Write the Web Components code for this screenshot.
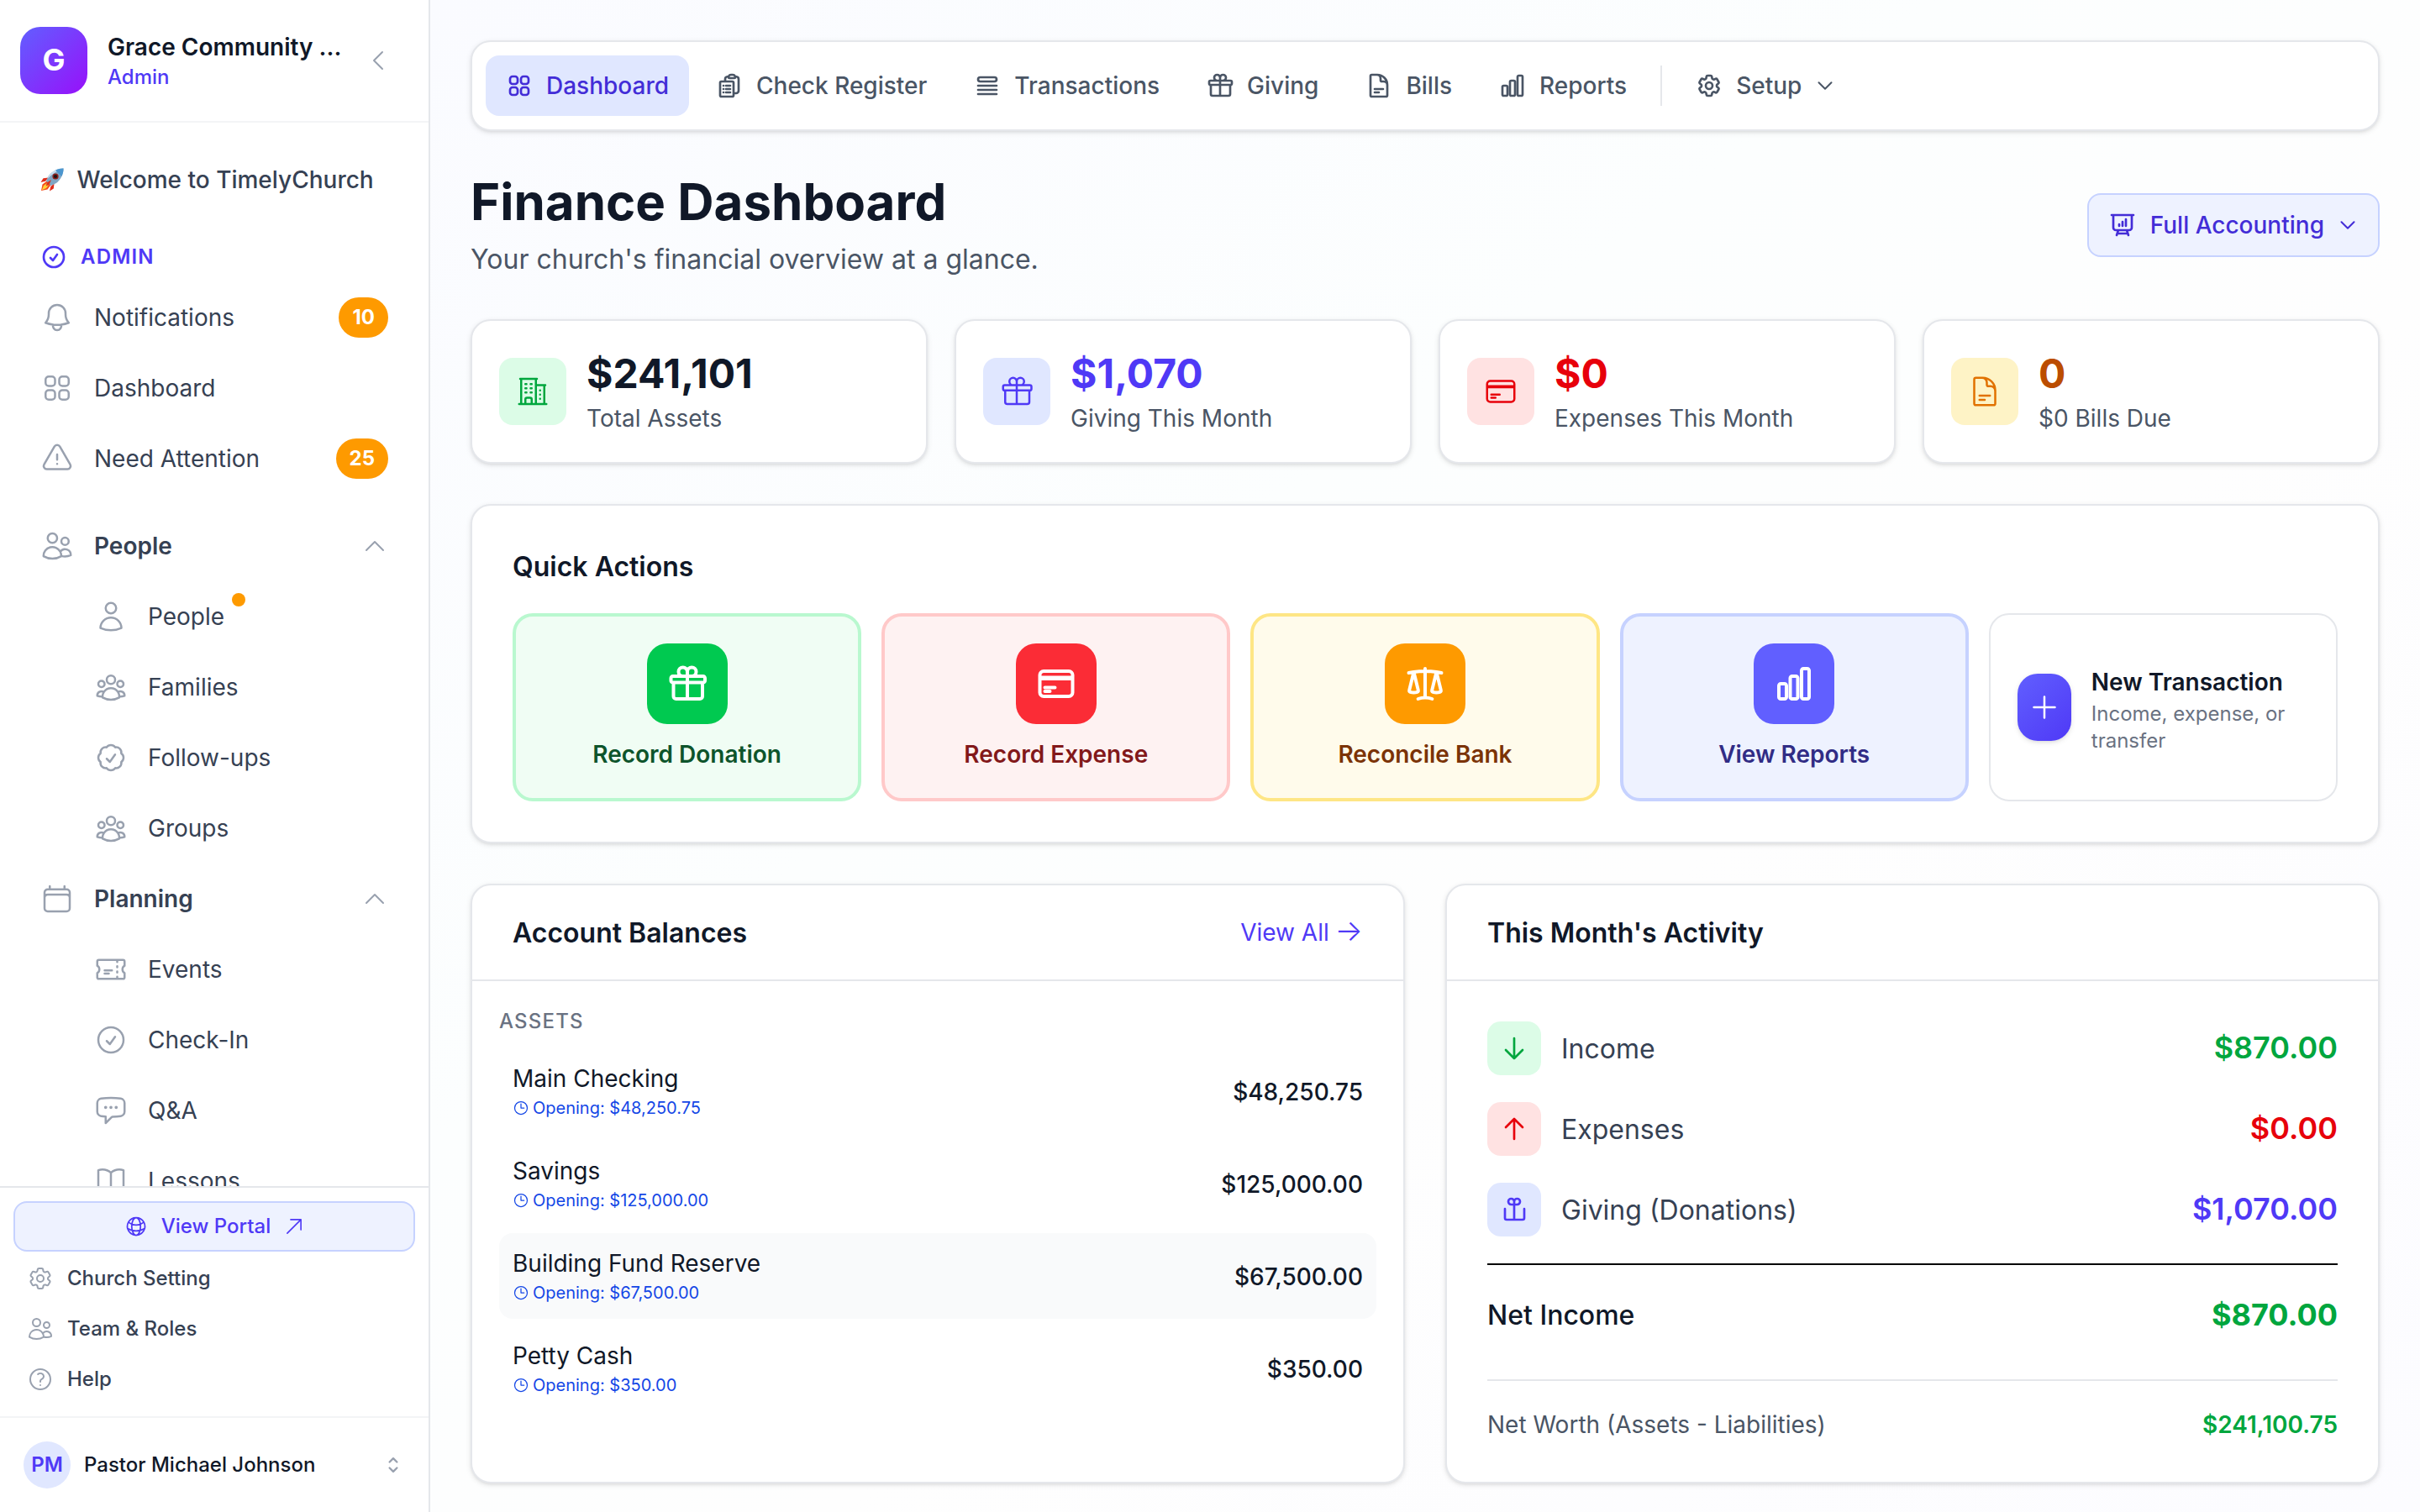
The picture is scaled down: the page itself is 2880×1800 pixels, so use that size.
<!DOCTYPE html>
<html lang="en">
<head>
<meta charset="utf-8">
<title>Finance Dashboard</title>
<style>
  html, body {
    margin: 0;
    height: 100%;
  }

  body {
    font-family: Inter, "Liberation Sans", sans-serif;
    font-size: 28px;
    line-height: 40px;
    color: #101828;
    overflow: hidden;
  }
</style>
</head>
<body>
<finance-app></finance-app>

<script>
const ICONS = {
  grid: 'M3.75 6A2.25 2.25 0 0 1 6 3.75h2.25A2.25 2.25 0 0 1 10.5 6v2.25a2.25 2.25 0 0 1-2.25 2.25H6a2.25 2.25 0 0 1-2.25-2.25V6ZM3.75 15.75A2.25 2.25 0 0 1 6 13.5h2.25a2.25 2.25 0 0 1 2.25 2.25V18a2.25 2.25 0 0 1-2.25 2.25H6A2.25 2.25 0 0 1 3.75 18v-2.25ZM13.5 6a2.25 2.25 0 0 1 2.25-2.25H18A2.25 2.25 0 0 1 20.25 6v2.25A2.25 2.25 0 0 1 18 10.5h-2.25a2.25 2.25 0 0 1-2.25-2.25V6ZM13.5 15.75a2.25 2.25 0 0 1 2.25-2.25H18a2.25 2.25 0 0 1 2.25 2.25V18A2.25 2.25 0 0 1 18 20.25h-2.25A2.25 2.25 0 0 1 13.5 18v-2.25Z',
  clipboard: 'M9 12h3.75M9 15h3.75M9 18h3.75m3 .75H18a2.25 2.25 0 0 0 2.25-2.25V6.108c0-1.135-.845-2.098-1.976-2.192a48.424 48.424 0 0 0-1.123-.08m-5.801 0c-.065.21-.1.433-.1.664 0 .414.336.75.75.75h4.5a.75.75 0 0 0 .75-.75 2.25 2.25 0 0 0-.1-.664m-5.8 0A2.251 2.251 0 0 1 13.5 2.25H15c1.012 0 1.867.668 2.15 1.586m-5.8 0c-.376.023-.75.05-1.124.08C9.095 4.01 8.25 4.973 8.25 6.108V8.25m0 0H4.875c-.621 0-1.125.504-1.125 1.125v11.25c0 .621.504 1.125 1.125 1.125h9.75c.621 0 1.125-.504 1.125-1.125V9.375c0-.621-.504-1.125-1.125-1.125H8.25ZM6.75 12h.008v.008H6.75V12Zm0 3h.008v.008H6.75V15Zm0 3h.008v.008H6.75V18Z',
  queue: 'M3.75 12h16.5m-16.5 3.75h16.5M3.75 19.5h16.5M5.625 4.5h12.75a1.875 1.875 0 0 1 0 3.75H5.625a1.875 1.875 0 0 1 0-3.75Z',
  gift: 'M21 11.25v8.25a1.5 1.5 0 0 1-1.5 1.5H5.25a1.5 1.5 0 0 1-1.5-1.5v-8.25M12 4.875A2.625 2.625 0 1 0 9.375 7.5H12m0-2.625V7.5m0-2.625A2.625 2.625 0 1 1 14.625 7.5H12m0 0V21m-8.625-9.75h18c.621 0 1.125-.504 1.125-1.125v-1.5c0-.621-.504-1.125-1.125-1.125h-18c-.621 0-1.125.504-1.125 1.125v1.5c0 .621.504 1.125 1.125 1.125Z',
  giftOpen: 'M21 11.25v8.25a1.5 1.5 0 0 1-1.5 1.5H5.25a1.5 1.5 0 0 1-1.5-1.5v-8.25M12 4.875A2.625 2.625 0 1 0 9.375 7.5H12m0-2.625V7.5m0-2.625A2.625 2.625 0 1 1 14.625 7.5H12m0 0V21',
  document: 'M19.5 14.25v-2.625a3.375 3.375 0 0 0-3.375-3.375h-1.5A1.125 1.125 0 0 1 13.5 7.125v-1.5a3.375 3.375 0 0 0-3.375-3.375H8.25m0 12.75h7.5m-7.5 3H12M10.5 2.25H5.625c-.621 0-1.125.504-1.125 1.125v17.25c0 .621.504 1.125 1.125 1.125h12.75c.621 0 1.125-.504 1.125-1.125V11.25a9 9 0 0 0-9-9Z',
  chart: 'M3 13.125C3 12.504 3.504 12 4.125 12h2.25c.621 0 1.125.504 1.125 1.125v6.75C7.5 20.496 6.996 21 6.375 21h-2.25A1.125 1.125 0 0 1 3 19.875v-6.75ZM9.75 8.625c0-.621.504-1.125 1.125-1.125h2.25c.621 0 1.125.504 1.125 1.125v11.25c0 .621-.504 1.125-1.125 1.125h-2.25a1.125 1.125 0 0 1-1.125-1.125V8.625ZM16.5 4.125c0-.621.504-1.125 1.125-1.125h2.25C20.496 3 21 3.504 21 4.125v15.75c0 .621-.504 1.125-1.125 1.125h-2.25a1.125 1.125 0 0 1-1.125-1.125V4.125Z',
  cog: 'M9.594 3.94c.09-.542.56-.94 1.11-.94h2.593c.55 0 1.02.398 1.11.94l.213 1.281c.063.374.313.686.645.87.074.04.147.083.22.127.325.196.72.257 1.075.124l1.217-.456a1.125 1.125 0 0 1 1.37.49l1.296 2.247a1.125 1.125 0 0 1-.26 1.431l-1.003.827c-.293.241-.438.613-.43.992a7.723 7.723 0 0 1 0 .255c-.008.378.137.75.43.991l1.004.827c.424.35.534.955.26 1.43l-1.298 2.247a1.125 1.125 0 0 1-1.369.491l-1.217-.456c-.355-.133-.75-.072-1.076.124a6.47 6.47 0 0 1-.22.128c-.331.183-.581.495-.644.869l-.213 1.281c-.09.543-.56.94-1.11.94h-2.594c-.55 0-1.019-.398-1.11-.94l-.213-1.281c-.062-.374-.312-.686-.644-.87a6.52 6.52 0 0 1-.22-.127c-.325-.196-.72-.257-1.076-.124l-1.217.456a1.125 1.125 0 0 1-1.369-.49l-1.297-2.247a1.125 1.125 0 0 1 .26-1.431l1.004-.827c.292-.24.437-.613.43-.991a6.932 6.932 0 0 1 0-.255c.007-.38-.138-.751-.43-.992l-1.004-.827a1.125 1.125 0 0 1-.26-1.43l1.297-2.247a1.125 1.125 0 0 1 1.37-.491l1.216.456c.356.133.751.072 1.076-.124.072-.044.146-.086.22-.128.332-.183.582-.495.644-.869l.214-1.28ZM15 12a3 3 0 1 1-6 0 3 3 0 0 1 6 0Z',
  building: 'M2.25 21h19.5m-18-18v18m10.5-18v18m6-13.5V21M6.75 6.75h.75m-.75 3h.75m-.75 3h.75m3-6h.75m-.75 3h.75m-.75 3h.75M6.75 21v-3.375c0-.621.504-1.125 1.125-1.125h2.25c.621 0 1.125.504 1.125 1.125V21M3 3h12m-.75 4.5H21m-3.75 3.75h.008v.008h-.008v-.008Zm0 3h.008v.008h-.008v-.008Zm0 3h.008v.008h-.008v-.008Z',
  card: 'M2.25 8.25h19.5M2.25 9h19.5m-16.5 5.25h6m-6 2.25h3m-3.75 3h15a2.25 2.25 0 0 0 2.25-2.25V6.75A2.25 2.25 0 0 0 19.5 4.5h-15a2.25 2.25 0 0 0-2.25 2.25v10.5A2.25 2.25 0 0 0 4.5 19.5Z',
  scale: 'M12 3v17.25m0 0c-1.472 0-2.882.265-4.185.75M12 20.25c1.472 0 2.882.265 4.185.75M18.75 4.97A48.416 48.416 0 0 0 12 4.5c-2.291 0-4.545.16-6.75.47m13.5 0c1.01.143 2.01.317 3 .52m-3-.52 2.62 10.726c.122.499-.106 1.028-.589 1.202a5.988 5.988 0 0 1-2.031.352 5.988 5.988 0 0 1-2.031-.352c-.483-.174-.711-.703-.59-1.202L18.75 4.971Zm-16.5.52c.99-.203 1.99-.377 3-.52m0 0 2.62 10.726c.122.499-.106 1.028-.589 1.202a5.989 5.989 0 0 1-2.031.352 5.989 5.989 0 0 1-2.031-.352c-.483-.174-.711-.703-.59-1.202L5.25 4.971Z',
  presentation: 'M3.75 3v11.25A2.25 2.25 0 0 0 6 16.5h2.25M3.75 3h-1.5m1.5 0h16.5m0 0h1.5m-1.5 0v11.25A2.25 2.25 0 0 1 18 16.5h-2.25m-7.5 0h7.5m-7.5 0-1 3m8.5-3 1 3m0 0 .5 1.5m-.5-1.5h-9.5m0 0-.5 1.5M9 11.25v1.5M12 9v3.75m3-6v6',
  bell: 'M14.857 17.082a23.848 23.848 0 0 0 5.454-1.31A8.967 8.967 0 0 1 18 9.75V9A6 6 0 0 0 6 9v.75a8.967 8.967 0 0 1-2.312 6.022c1.733.64 3.56 1.085 5.455 1.31m5.714 0a24.255 24.255 0 0 1-5.714 0m5.714 0a3 3 0 1 1-5.714 0',
  warning: 'M12 9v3.75m-9.303 3.376c-.866 1.5.217 3.374 1.948 3.374h14.71c1.73 0 2.813-1.874 1.948-3.374L13.949 3.378c-.866-1.5-3.032-1.5-3.898 0L2.697 16.126ZM12 15.75h.007v.008H12v-.008Z',
  users: 'M15 19.128a9.38 9.38 0 0 0 2.625.372 9.337 9.337 0 0 0 4.121-.952 4.125 4.125 0 0 0-7.533-2.493M15 19.128v-.003c0-1.113-.285-2.16-.786-3.07M15 19.128v.106A12.318 12.318 0 0 1 8.624 21c-2.331 0-4.512-.645-6.374-1.766l-.001-.109a6.375 6.375 0 0 1 11.964-3.07M12 6.375a3.375 3.375 0 1 1-6.75 0 3.375 3.375 0 0 1 6.75 0Zm8.25 2.25a2.625 2.625 0 1 1-5.25 0 2.625 2.625 0 0 1 5.25 0Z',
  user: 'M15.75 6a3.75 3.75 0 1 1-7.5 0 3.75 3.75 0 0 1 7.5 0ZM4.501 20.118a7.5 7.5 0 0 1 14.998 0A17.933 17.933 0 0 1 12 21.75c-2.676 0-5.216-.584-7.499-1.632Z',
  group: 'M18 18.72a9.094 9.094 0 0 0 3.741-.479 3 3 0 0 0-4.682-2.72m.94 3.198.001.031c0 .225-.012.447-.037.666A11.944 11.944 0 0 1 12 21c-2.17 0-4.207-.576-5.963-1.584A6.062 6.062 0 0 1 6 18.719m12 0a5.971 5.971 0 0 0-.941-3.197m0 0A5.995 5.995 0 0 0 12 12.75a5.995 5.995 0 0 0-5.058 2.772m0 0a3 3 0 0 0-4.681 2.72 8.986 8.986 0 0 0 3.74.477m.94-3.197a5.971 5.971 0 0 0-.94 3.197M15 6.75a3 3 0 1 1-6 0 3 3 0 0 1 6 0Zm6 3a2.25 2.25 0 1 1-4.5 0 2.25 2.25 0 0 1 4.5 0Zm-13.5 0a2.25 2.25 0 1 1-4.5 0 2.25 2.25 0 0 1 4.5 0Z',
  badge: 'M9 12.75 11.25 15 15 9.75M21 12c0 1.268-.63 2.39-1.593 3.068a3.745 3.745 0 0 1-1.043 3.296 3.745 3.745 0 0 1-3.296 1.043A3.745 3.745 0 0 1 12 21c-1.268 0-2.39-.63-3.068-1.593a3.746 3.746 0 0 1-3.296-1.043 3.745 3.745 0 0 1-1.043-3.296A3.745 3.745 0 0 1 3 12c0-1.268.63-2.39 1.593-3.068a3.745 3.745 0 0 1 1.043-3.296 3.746 3.746 0 0 1 3.296-1.043A3.746 3.746 0 0 1 12 3c1.268 0 2.39.63 3.068 1.593a3.746 3.746 0 0 1 3.296 1.043 3.746 3.746 0 0 1 1.043 3.296A3.745 3.745 0 0 1 21 12Z',
  check: 'M9 12.75 11.25 15 15 9.75M21 12a9 9 0 1 1-18 0 9 9 0 0 1 18 0Z',
  calendar: 'M6.75 3v2.25M17.25 3v2.25M3 18.75V7.5a2.25 2.25 0 0 1 2.25-2.25h13.5A2.25 2.25 0 0 1 21 7.5v11.25m-18 0A2.25 2.25 0 0 0 5.25 21h13.5A2.25 2.25 0 0 0 21 18.75m-18 0v-7.5A2.25 2.25 0 0 1 5.25 9h13.5A2.25 2.25 0 0 1 21 11.25v7.5',
  ticket: 'M16.5 6v.75m0 3v.75m0 3v.75m0 3V18m-9-5.25h5.25M7.5 15h3M3.375 5.25c-.621 0-1.125.504-1.125 1.125v3.026a2.999 2.999 0 0 1 0 5.198v3.026c0 .621.504 1.125 1.125 1.125h17.25c.621 0 1.125-.504 1.125-1.125v-3.026a2.999 2.999 0 0 1 0-5.198V6.375c0-.621-.504-1.125-1.125-1.125H3.375Z',
  chat: 'M8.625 9.75a.375.375 0 1 1-.75 0 .375.375 0 0 1 .75 0Zm0 0H8.25m4.125 0a.375.375 0 1 1-.75 0 .375.375 0 0 1 .75 0Zm0 0H12m4.125 0a.375.375 0 1 1-.75 0 .375.375 0 0 1 .75 0Zm0 0h-.375m-13.5 3.01c0 1.6 1.123 2.994 2.707 3.227 1.087.16 2.185.283 3.293.369V21l4.184-4.183a1.14 1.14 0 0 1 .778-.332 48.294 48.294 0 0 0 5.83-.498c1.585-.233 2.708-1.626 2.708-3.228V6.741c0-1.602-1.123-2.995-2.707-3.228A48.394 48.394 0 0 0 12 3c-2.392 0-4.744.175-7.043.513C3.373 3.746 2.25 5.14 2.25 6.741v6.018Z',
  book: 'M12 6.042A8.967 8.967 0 0 0 6 3.75c-1.052 0-2.062.18-3 .512v14.25A8.987 8.987 0 0 1 6 18c2.305 0 4.408.867 6 2.292m0-14.25a8.966 8.966 0 0 1 6-2.292c1.052 0 2.062.18 3 .512v14.25A8.987 8.987 0 0 0 18 18a8.967 8.967 0 0 0-6 2.292m0-14.25v14.25',
  globe: 'M12 21a9.004 9.004 0 0 0 8.716-6.747M12 21a9.004 9.004 0 0 1-8.716-6.747M12 21c2.485 0 4.5-4.03 4.5-9S14.485 3 12 3m0 18c-2.485 0-4.5-4.03-4.5-9S9.515 3 12 3m0 0a8.997 8.997 0 0 1 7.843 4.582M12 3a8.997 8.997 0 0 0-7.843 4.582m15.686 0A11.953 11.953 0 0 1 12 10.5c-2.998 0-5.74-1.1-7.843-2.918m15.686 0A8.959 8.959 0 0 1 21 12c0 .778-.099 1.533-.284 2.253m0 0A17.919 17.919 0 0 1 12 16.5c-3.162 0-6.133-.815-8.716-2.247m0 0A9.015 9.015 0 0 1 3 12c0-1.605.42-3.113 1.157-4.418',
  help: 'M9.879 7.519c1.171-1.025 3.071-1.025 4.242 0 1.172 1.025 1.172 2.687 0 3.712-.203.179-.43.326-.67.442-.745.361-1.45.999-1.45 1.827v.75M21 12a9 9 0 1 1-18 0 9 9 0 0 1 18 0Zm-9 5.25h.008v.008H12v-.008Z',
  clock: 'M12 6v6h4.5m4.5 0a9 9 0 1 1-18 0 9 9 0 0 1 18 0Z',
  external: 'm4.5 19.5 15-15m0 0H8.25m11.25 0v11.25',
  plus: 'M12 4.5v15m7.5-7.5h-15',
  down: 'm19.5 8.25-7.5 7.5-7.5-7.5',
  up: 'm4.5 15.75 7.5-7.5 7.5 7.5',
  left: 'M15.75 19.5 8.25 12l7.5-7.5',
  updown: 'M8.25 15 12 18.75 15.75 15m-7.5-6L12 5.25 15.75 9',
  arrowDown: 'M19.5 13.5 12 21m0 0-7.5-7.5M12 21V3',
  arrowUp: 'M4.5 10.5 12 3m0 0 7.5 7.5M12 3v18'
};

function define(name, render) {
  customElements.define(name, class extends HTMLElement {
    constructor() {
      super();
      this.attachShadow({ mode: 'open' });
    }

    connectedCallback() {
      this.shadowRoot.innerHTML = render(this);
    }
  });
}

const attr = (el, name, fallback = '') => el.getAttribute(name) ?? fallback;

define('ui-icon', (el) => `
  <style>
    :host {
      display: block;
      flex: none;
      width: ${attr(el, 'size', 32)}px;
      height: ${attr(el, 'size', 32)}px;
    }
    svg { display: block; width: 100%; height: 100%; }
  </style>
  <svg viewBox="0 0 24 24" fill="none" stroke="currentColor" stroke-width="${attr(el, 'stroke', 1.5)}"
    stroke-linecap="round" stroke-linejoin="round"><path d="${ICONS[attr(el, 'name')]}"/></svg>
`);

define('rocket-icon', () => `
  <style>
    :host { display: block; flex: none; width: 28px; height: 28px; }
    svg { display: block; }
  </style>
  <svg viewBox="0 0 28 28" width="28" height="28">
    <path d="M9.5 11.5 3.5 12.2 0.5 17l5.6-1.3ZM16.500 18.500 15.800 24.500 11 27.500l1.300-5.600Z" fill="#e02d1b"/>
    <path d="M8.500 15 2.500 19.500 1 27l7.500-1.500 4.500-6Z" fill="#f6501e"/>
    <path d="M8 18 4 21 1.800 26.200 7 24 10 20Z" fill="#ffd43a"/>
    <path d="M27.500.5C21 .3 14.500 3.500 10 9L7 15.500 12.500 21 19 18C24.500 13.500 27.700 7 27.500.5Z" fill="#7fa6c4"/>
    <path d="M27.500.5C21 .3 14.500 3.500 10 9L8.800 12.500C14 7 20 3 27.500.5Z" fill="#c9dfee"/>
    <path d="M27.500.5C24 .4 20.800 1.300 18 2.700L25.300 10C26.800 7.200 27.600 4 27.500.5Z" fill="#4b96cf"/>
    <circle cx="18" cy="10" r="3.600" fill="#8c1d18"/>
    <circle cx="18" cy="10" r="2.100" fill="#1d1416"/>
    <path d="M13 14 8 17.500 6.500 21.500 10.500 20Z" fill="#d8341f"/>
  </svg>
`);

/* sidebar */

define('side-item', (el) => `
  <style>
    :host {
      display: flex;
      align-items: center;
      gap: 24px;
      height: 84px;
      padding: 0 48px;
      color: #364153;
    }
    :host([child]) { padding-left: 112px; }
    :host([section]) { font-weight: 600; }
    ui-icon { color: #99a1af; }
    .label { position: relative; flex: none; }
    .push { margin-left: auto; }
    .count {
      margin-left: auto;
      padding: 8px 16px;
      border-radius: 24px;
      background: #fe9a00;
      color: #fff;
      font-size: 24px;
      line-height: 32px;
      font-weight: 700;
    }
    .dot {
      position: absolute;
      top: -8px;
      right: -25px;
      width: 16px;
      height: 16px;
      border-radius: 50%;
      background: #fe9a00;
    }
  </style>
  <ui-icon name="${attr(el, 'icon')}" size="40"></ui-icon>
  <span class="label"><slot></slot>${el.hasAttribute('dot') ? '<i class="dot"></i>' : ''}</span>
  ${el.hasAttribute('count') ? `<span class="count">${attr(el, 'count')}</span>` : ''}
  ${el.hasAttribute('section') ? '<ui-icon class="push" name="up"></ui-icon>' : ''}
`);

define('foot-link', (el) => `
  <style>
    :host {
      display: flex;
      align-items: center;
      gap: 16px;
      height: 56px;
      padding: 0 16px;
      font-size: 24px;
      line-height: 32px;
      font-weight: 500;
      color: #364153;
    }
    ui-icon { color: #99a1af; }
  </style>
  <ui-icon name="${attr(el, 'icon')}"></ui-icon>
  <slot></slot>
`);

define('app-sidebar', () => `
  <style>
    :host {
      display: flex;
      flex-direction: column;
      flex: none;
      box-sizing: border-box;
      width: 512px;
      height: 100%;
      background: #fff;
      border-right: 2px solid #e5e7eb;
    }
    header {
      display: flex;
      align-items: center;
      flex: none;
      box-sizing: border-box;
      height: 146px;
      padding: 0 44px 0 24px;
      border-bottom: 2px solid #f3f4f6;
    }
    .logo {
      display: flex;
      align-items: center;
      justify-content: center;
      width: 80px;
      height: 80px;
      border-radius: 24px;
      background: linear-gradient(135deg, #615fff, #9810fa);
      color: #fff;
      font-size: 36px;
      font-weight: 700;
    }
    .logo span { padding-bottom: 2px; }
    .church { flex: 1; padding-left: 24px; white-space: nowrap; font-weight: 600; }
    .church small {
      display: block;
      font-size: 24px;
      line-height: 32px;
      font-weight: 500;
      color: #4f39f6;
    }
    header ui-icon { color: #99a1af; }
    nav { flex: 1; min-height: 0; overflow: hidden; padding-top: 48px; }
    .welcome {
      display: flex;
      align-items: center;
      gap: 15.5px;
      padding: 0 48px;
      font-weight: 500;
      color: #364153;
    }
    .role {
      display: flex;
      align-items: center;
      gap: 16px;
      padding: 56px 48px 14px;
      font-size: 24px;
      line-height: 32px;
      font-weight: 600;
      letter-spacing: 1.2px;
      color: #4f39f6;
    }
    .group { margin-top: 20px; }
    footer { flex: none; border-top: 2px solid #e5e7eb; }
    .links { display: flex; flex-direction: column; gap: 4px; padding: 16px; }
    .portal {
      display: flex;
      align-items: center;
      justify-content: center;
      gap: 16px;
      padding: 12px 0;
      border: 2px solid #c6d2ff;
      border-radius: 16px;
      background: #eef2ff;
      font-size: 24px;
      line-height: 32px;
      font-weight: 500;
      color: #4f39f6;
    }
    .portal ui-icon:last-child { margin: 0 -1px; }
    .user {
      display: flex;
      align-items: center;
      height: 112px;
      padding: 0 28px;
      border-top: 2px solid #f3f4f6;
      font-size: 24px;
      font-weight: 500;
    }
    .avatar {
      display: flex;
      align-items: center;
      justify-content: center;
      width: 56px;
      height: 56px;
      margin-right: 16px;
      border-radius: 50%;
      background: #e0e7ff;
      color: #4f39f6;
      font-weight: 600;
    }
    .user ui-icon { margin-left: auto; color: #99a1af; }
  </style>
  <header>
    <div class="logo"><span>G</span></div>
    <div class="church">Grace Community ...<small>Admin</small></div>
    <ui-icon name="left"></ui-icon>
  </header>
  <nav>
    <div class="welcome"><rocket-icon></rocket-icon>Welcome to TimelyChurch</div>
    <div class="role"><ui-icon name="check" stroke="2"></ui-icon>ADMIN</div>
    <side-item icon="bell" count="10">Notifications</side-item>
    <side-item icon="grid">Dashboard</side-item>
    <side-item icon="warning" count="25">Need Attention</side-item>
    <div class="group">
      <side-item section icon="users">People</side-item>
      <side-item child icon="user" dot>People</side-item>
      <side-item child icon="group">Families</side-item>
      <side-item child icon="badge">Follow-ups</side-item>
      <side-item child icon="group">Groups</side-item>
      <side-item section icon="calendar">Planning</side-item>
      <side-item child icon="ticket">Events</side-item>
      <side-item child icon="check">Check-In</side-item>
      <side-item child icon="chat">Q&amp;A</side-item>
      <side-item child icon="book">Lessons</side-item>
    </div>
  </nav>
  <footer>
    <div class="links">
      <div class="portal">
        <ui-icon name="globe" size="28"></ui-icon>View Portal<ui-icon name="external" size="26"></ui-icon>
      </div>
      <foot-link icon="cog">Church Setting</foot-link>
      <foot-link icon="users">Team &amp; Roles</foot-link>
      <foot-link icon="help">Help</foot-link>
    </div>
    <div class="user">
      <span class="avatar">PM</span>Pastor Michael Johnson
      <ui-icon name="updown" size="28" stroke="2"></ui-icon>
    </div>
  </footer>
`);

/* top navigation */

define('nav-tab', (el) => `
  <style>
    :host {
      display: flex;
      align-items: center;
      gap: 16px;
      height: 72px;
      padding: 0 24px;
      border-radius: 16px;
      font-weight: 500;
      color: #4a5565;
    }
    :host([active]) { background: #e0e7ff; color: #432dd7; }
  </style>
  <ui-icon name="${attr(el, 'icon')}" stroke="2"></ui-icon>
  <slot></slot>
  ${el.hasAttribute('menu') ? '<ui-icon name="down" size="24" stroke="2"></ui-icon>' : ''}
`);

define('finance-nav', () => `
  <style>
    :host {
      display: flex;
      align-items: center;
      gap: 8px;
      padding: 16px;
      border: 2px solid #e5e7eb;
      border-radius: 24px;
      background: #fff;
      box-shadow: 0 2px 6px rgba(0, 0, 0, .1), 0 2px 4px -2px rgba(0, 0, 0, .1);
    }
    hr { width: 2px; height: 48px; margin: 0 8px; border: 0; background: #e5e7eb; }
  </style>
  <nav-tab active icon="grid">Dashboard</nav-tab>
  <nav-tab icon="clipboard">Check Register</nav-tab>
  <nav-tab icon="queue">Transactions</nav-tab>
  <nav-tab icon="gift">Giving</nav-tab>
  <nav-tab icon="document">Bills</nav-tab>
  <nav-tab icon="chart">Reports</nav-tab>
  <hr>
  <nav-tab icon="cog" menu>Setup</nav-tab>
`);

define('page-heading', () => `
  <style>
    :host { display: flex; align-items: center; justify-content: space-between; }
    h1 { margin: 0; font-size: 60px; line-height: 72px; font-weight: 700; }
    p { margin: 0; padding-top: 10px; font-size: 32px; line-height: 46px; color: #4a5565; }
    .mode {
      display: flex;
      align-items: center;
      gap: 16px;
      padding: 16px 24px;
      border: 2px solid #c6d2ff;
      border-radius: 16px;
      background: #eef2ff;
      font-weight: 500;
      color: #432dd7;
    }
    .mode ui-icon:first-child { margin-right: 1px; }
  </style>
  <div>
    <h1>Finance Dashboard</h1>
    <p>Your church's financial overview at a glance.</p>
  </div>
  <div class="mode">
    <ui-icon name="presentation" stroke="2"></ui-icon>Full Accounting<ui-icon name="down" size="24" stroke="2"></ui-icon>
  </div>
`);

/* cards */

define('panel-card', () => `
  <style>
    :host {
      display: flex;
      flex-direction: column;
      box-sizing: border-box;
      border: 2px solid #e5e7eb;
      border-radius: 24px;
      background: #fff;
      box-shadow: 0 2px 6px rgba(0, 0, 0, .1), 0 2px 4px -2px rgba(0, 0, 0, .1);
    }
  </style>
  <slot></slot>
`);

define('stat-card', (el) => `
  <style>
    .row { display: flex; align-items: center; gap: 24px; padding: 32px; }
    .icon {
      display: flex;
      align-items: center;
      justify-content: center;
      width: 80px;
      height: 80px;
      border-radius: 16px;
      background: ${attr(el, 'tint')};
      color: ${attr(el, 'stroke')};
    }
    .value { font-size: 48px; line-height: 62px; font-weight: 700; color: ${attr(el, 'ink')}; }
    .label { margin-top: 2px; color: #4a5565; }
  </style>
  <panel-card>
    <div class="row">
      <div class="icon"><ui-icon name="${attr(el, 'icon')}" size="40"></ui-icon></div>
      <div>
        <div class="value">${attr(el, 'value')}</div>
        <div class="label"><slot></slot></div>
      </div>
    </div>
  </panel-card>
`);

define('action-tile', (el) => `
  <style>
    :host {
      display: flex;
      flex-direction: column;
      align-items: center;
      gap: 16px;
      padding: 32px;
      border: 4px solid ${attr(el, 'line')};
      border-radius: 24px;
      background: ${attr(el, 'tint')};
      color: ${attr(el, 'ink')};
      font-weight: 600;
    }
    .icon {
      display: flex;
      align-items: center;
      justify-content: center;
      width: 96px;
      height: 96px;
      border-radius: 24px;
      background: ${attr(el, 'solid')};
      color: #fff;
    }
  </style>
  <div class="icon"><ui-icon name="${attr(el, 'icon')}" size="48" stroke="2"></ui-icon></div>
  <slot></slot>
`);

define('new-transaction', () => `
  <style>
    :host {
      display: flex;
      align-items: center;
      gap: 24px;
      padding: 0 32px;
      border: 2px solid #e5e7eb;
      border-radius: 24px;
    }
    .icon {
      display: flex;
      align-items: center;
      justify-content: center;
      flex: none;
      width: 64px;
      height: 80px;
      border-radius: 24px;
      background: linear-gradient(135deg, #615fff, #4f39f6);
      box-shadow: 0 2px 6px rgba(0, 0, 0, .1), 0 2px 4px -2px rgba(0, 0, 0, .1);
      color: #fff;
    }
    .text { padding-top: 6px; }
    .title { font-weight: 600; }
    .note { margin-top: 2px; font-size: 24px; line-height: 32px; color: #6a7282; }
  </style>
  <div class="icon"><ui-icon name="plus" size="40"></ui-icon></div>
  <div class="text">
    <div class="title">New Transaction</div>
    <div class="note">Income, expense, or transfer</div>
  </div>
`);

define('quick-actions', () => `
  <style>
    .body { padding: 48px; }
    h2 { margin: 0 0 32px; padding-top: 2px; font-size: 32px; line-height: 46px; font-weight: 600; }
    .tiles { display: grid; grid-template-columns: repeat(5, minmax(0, 1fr)); gap: 24px; }
  </style>
  <panel-card>
    <div class="body">
      <h2>Quick Actions</h2>
      <div class="tiles">
        <action-tile icon="gift" line="#b9f8cf" tint="#f0fdf4" solid="#00c950" ink="#0d542b">Record Donation</action-tile>
        <action-tile icon="card" line="#ffc9c9" tint="#fef2f2" solid="#fb2c36" ink="#82181a">Record Expense</action-tile>
        <action-tile icon="scale" line="#fee685" tint="#fffbeb" solid="#fe9a00" ink="#7b3306">Reconcile Bank</action-tile>
        <action-tile icon="chart" line="#c6d2ff" tint="#eef2ff" solid="#615fff" ink="#312c85">View Reports</action-tile>
        <new-transaction></new-transaction>
      </div>
    </div>
  </panel-card>
`);

define('card-header', () => `
  <style>
    :host {
      display: flex;
      align-items: center;
      justify-content: space-between;
      padding: 32px 48px;
      border-bottom: 2px solid #e5e7eb;
    }
    h2 { margin: 0; padding-top: 2px; font-size: 32px; line-height: 46px; font-weight: 600; }
  </style>
  <h2><slot></slot></h2>
  <slot name="action"></slot>
`);

define('account-row', (el) => `
  <style>
    :host {
      display: flex;
      align-items: center;
      justify-content: space-between;
      padding: 16px;
      border-radius: 16px;
    }
    :host([hover]) { background: #f9fafb; }
    .opening {
      display: flex;
      align-items: center;
      gap: 4px;
      font-size: 20px;
      line-height: 30px;
      color: #1447e6;
    }
    .amount { padding-top: 2px; font-weight: 500; }
  </style>
  <div>
    <slot></slot>
    <div class="opening"><ui-icon name="clock" size="20"></ui-icon>Opening: ${attr(el, 'amount')}</div>
  </div>
  <div class="amount">${attr(el, 'amount')}</div>
`);

define('account-balances', () => `
  <style>
    :host { display: grid; }
    .all { white-space: nowrap; color: #4f39f6; }
    .arrow { margin-left: -1px; font-size: 35px; line-height: 0; font-weight: 300; }
    .body { display: grid; gap: 8px; padding: 32px; }
    .kind {
      margin-bottom: 8px;
      font-size: 24px;
      line-height: 32px;
      font-weight: 500;
      letter-spacing: 1.2px;
      color: #6a7282;
    }
  </style>
  <panel-card>
    <card-header>Account Balances<a class="all" slot="action">View All <span class="arrow">→</span></a></card-header>
    <div class="body">
      <div class="kind">ASSETS</div>
      <account-row amount="$48,250.75">Main Checking</account-row>
      <account-row amount="$125,000.00">Savings</account-row>
      <account-row amount="$67,500.00" hover>Building Fund Reserve</account-row>
      <account-row amount="$350.00">Petty Cash</account-row>
    </div>
  </panel-card>
`);

define('activity-row', (el) => `
  <style>
    :host {
      display: flex;
      align-items: center;
      gap: 24px;
      height: 64px;
      font-size: 32px;
      line-height: 48px;
      color: #364153;
    }
    .icon {
      display: flex;
      align-items: center;
      justify-content: center;
      width: 64px;
      height: 64px;
      border-radius: 16px;
      background: ${attr(el, 'tint')};
      color: ${attr(el, 'ink')};
    }
    .label { padding-top: 2px; }
    .value {
      margin-left: auto;
      padding-bottom: 2px;
      font-size: 36px;
      line-height: 56px;
      font-weight: 600;
      color: ${attr(el, 'ink')};
    }
  </style>
  <div class="icon"><ui-icon name="${attr(el, 'icon')}" stroke="2"></ui-icon></div>
  <span class="label"><slot></slot></span>
  <span class="value">${attr(el, 'value')}</span>
`);

define('month-activity', () => `
  <style>
    :host { display: grid; }
    .body { display: grid; gap: 32px; padding: 48px; }
    .net, .worth { display: flex; align-items: center; justify-content: space-between; }
    .net {
      padding-top: 32px;
      border-top: 2px solid #000;
      font-size: 32px;
      line-height: 48px;
      font-weight: 500;
    }
    .net b { padding-bottom: 2px; font-size: 36px; line-height: 54px; font-weight: 700; color: #00a63e; }
    .worth {
      margin-top: 16px;
      padding-top: 32px;
      border-top: 2px solid #e5e7eb;
      color: #4a5565;
    }
    .worth b { font-weight: 600; color: #00a63e; }
  </style>
  <panel-card>
    <card-header>This Month's Activity</card-header>
    <div class="body">
      <activity-row icon="arrowDown" tint="#dcfce7" ink="#00a63e" value="$870.00">Income</activity-row>
      <activity-row icon="arrowUp" tint="#ffe2e2" ink="#e7000b" value="$0.00">Expenses</activity-row>
      <activity-row icon="giftOpen" tint="#e0e7ff" ink="#4f39f6" value="$1,070.00">Giving (Donations)</activity-row>
      <div class="net">Net Income<b>$870.00</b></div>
      <div class="worth">Net Worth (Assets - Liabilities)<b>$241,100.75</b></div>
    </div>
  </panel-card>
`);

define('finance-app', () => `
  <style>
    :host { display: flex; width: 100%; height: 100%; }
    main {
      display: flex;
      flex-direction: column;
      gap: 48px;
      flex: 1;
      min-width: 0;
      padding: 48px;
      background: linear-gradient(to bottom right, #fafbff, #fcfefe 38%, #fefefe 60%, #fcfcff);
    }
    .stats { display: grid; grid-template-columns: repeat(4, 1fr); gap: 32px; }
    .columns { display: grid; grid-template-columns: 1fr 1fr; gap: 48px; }
  </style>
  <app-sidebar></app-sidebar>
  <main>
    <finance-nav></finance-nav>
    <page-heading></page-heading>
    <div class="stats">
      <stat-card icon="building" tint="#dcfce7" stroke="#00a63e" ink="#101828" value="$241,101">Total Assets</stat-card>
      <stat-card icon="gift" tint="#e0e7ff" stroke="#4f39f6" ink="#4f39f6" value="$1,070">Giving This Month</stat-card>
      <stat-card icon="card" tint="#ffe2e2" stroke="#e7000b" ink="#e7000b" value="$0">Expenses This Month</stat-card>
      <stat-card icon="document" tint="#fef3c6" stroke="#e17100" ink="#bb4d00" value="0">$0 Bills Due</stat-card>
    </div>
    <quick-actions></quick-actions>
    <div class="columns">
      <account-balances></account-balances>
      <month-activity></month-activity>
    </div>
  </main>
`);
</script>
</body>
</html>
